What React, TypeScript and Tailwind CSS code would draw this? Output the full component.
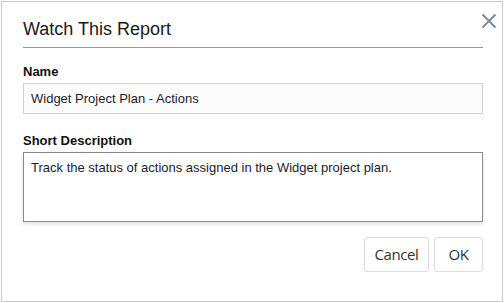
import React from "react";

export default function App() {
  return (
    <div className="w-[504px] h-[303px] bg-white p-px">
      <div className="relative w-[502px] h-[301px] border border-[#cbcbcb] bg-white pl-[21px] pr-[19px] pt-[15px] font-['Liberation_Sans',Arial,sans-serif]">
        <button className="absolute top-[11px] right-[5px] w-[16px] h-[16px] flex items-center justify-center">
          <svg width="16" height="16" viewBox="0 0 16 16">
            <path d="M1.5 1.5 L14.5 14.5 M14.5 1.5 L1.5 14.5" stroke="#7f8c99" strokeWidth="2" fill="none" />
          </svg>
        </button>
        <div className="h-[31px] pb-[6px] border-b border-[#999999]">
          <div className="h-[24px] leading-[24px] text-[18px] text-[#1a1a1a]">Watch This Report</div>
        </div>
        <div className="mt-[16px] h-[16px] leading-[16px] text-[13px] font-bold text-[#111]">Name</div>
        <div className="mt-[3px] h-[31px] border border-[#d2d2d2] bg-[#fcfcfc] pl-[7px] flex items-center text-[13px] text-[#1c1c30]">
          Widget Project Plan - Actions
        </div>
        <div className="mt-[19px] h-[16px] leading-[16px] text-[13px] font-bold text-[#111]">Short Description</div>
        <div className="mt-[3px] h-[70px] border border-[#8a8a8a] bg-white pl-[7px] pt-[7px] text-[13px] leading-[16px] text-[#1c1c30] shadow-[0_2px_4px_rgba(0,0,0,0.12)]">
          Track the status of actions assigned in the Widget project plan.
        </div>
        <div className="mt-[15px] flex justify-end gap-[5px] font-['Open_Sans',sans-serif] text-[15px] tracking-[-0.4px] text-[#333]">
          <button className="w-[65px] h-[35px] border border-[#dcdcdc] rounded-[3px] bg-white flex items-center justify-center">Cancel</button>
          <button className="w-[49px] h-[35px] border border-[#dcdcdc] rounded-[3px] bg-white flex items-center justify-center">OK</button>
        </div>
      </div>
    </div>
  );
}
